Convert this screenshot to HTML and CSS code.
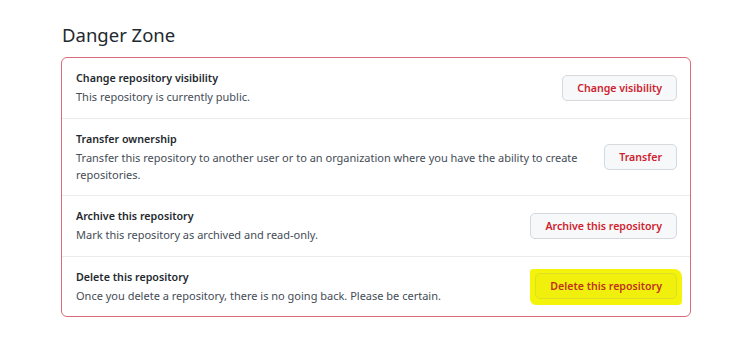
FILE: index.html
```html
<!DOCTYPE html>
<html lang="en">
  <head>
    <meta charset="UTF-8" />
    <meta name="viewport" content="width=device-width, initial-scale=1.0" />
    <title>Danger Zone</title>
    <link rel="stylesheet" href="styles.css">
  </head>
  <body>
    <h2 class="zone-title">Danger Zone</h2>
    <div class="danger-box">
      <div class="danger-row">
        <div class="row-text">
          <strong>Change repository visibility</strong>
          <p>This repository is currently public.</p>
        </div>
        <button class="btn-danger">Change visibility</button>
      </div>
      <div class="danger-row">
        <div class="row-text">
          <strong>Transfer ownership</strong>
          <p>Transfer this repository to another user or to an organization where you have the ability to create repositories.</p>
        </div>
        <button class="btn-danger">Transfer</button>
      </div>
      <div class="danger-row">
        <div class="row-text">
          <strong>Archive this repository</strong>
          <p>Mark this repository as archived and read-only.</p>
        </div>
        <button class="btn-danger">Archive this repository</button>
      </div>
      <div class="danger-row">
        <div class="row-text">
          <strong>Delete this repository</strong>
          <p>Once you delete a repository, there is no going back. Please be certain.</p>
        </div>
        <span class="marker">
          <button class="btn-danger">Delete this repository</button>
        </span>
      </div>
    </div>
  </body>
</html>
```

FILE: styles.css
```css
body {
  margin: 0;
  padding: 22px 64px 0 61px;
  font-family: "Noto Sans", "Open Sans", sans-serif;
  color: #24292f;
  background: #fff;
}

.zone-title {
  margin: 0 0 9px 1px;
  font-size: 18.5px;
  font-weight: 400;
  line-height: 26px;
  color: #24292f;
}

.danger-box {
  border: 1px solid #d96c78;
  border-radius: 6px;
}

.danger-row {
  display: flex;
  align-items: center;
  justify-content: space-between;
  gap: 24px;
  padding: 12px 13px 12.5px 14px;
  border-top: 1px solid #eaecef;
}

.danger-row:first-child {
  border-top: none;
}

.row-text {
  font-size: 11px;
  line-height: 17px;
}

.row-text strong {
  display: block;
  margin-bottom: 1px;
  font-size: 10.7px;
  font-weight: 600;
}

.row-text p {
  margin: 0;
  color: #444c56;
}

.btn-danger {
  flex-shrink: 0;
  height: 26px;
  padding: 0 14px;
  font-family: inherit;
  font-size: 10.6px;
  font-weight: 600;
  color: #cf222e;
  background: #f6f8fa;
  border: 1px solid #d5d8dc;
  border-radius: 5px;
}

.marker {
  flex-shrink: 0;
  padding: 4px 5px 6px 5px;
  margin: -2px -5px -4px 0;
  background: #f4f40a;
  border-radius: 3px 8px 4px 6px;
}

.marker .btn-danger {
  background: #f0f00c;
  border-color: #dede2a;
  color: #c0301f;
}
```
